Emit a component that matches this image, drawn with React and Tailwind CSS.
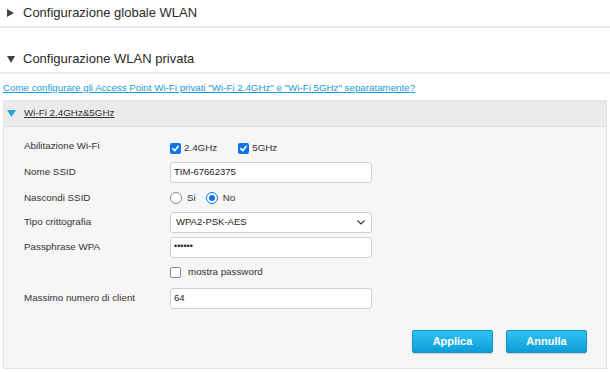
import React from "react";

function Field({ children }) {
  return <div className="w-[202px] h-[21px] bg-white border border-[#cfcfcf] rounded-[3px] flex items-center pl-[3px] pr-[6px] text-[9.5px] text-[#222]">{children}</div>;
}

function Row({ label, h, children }) {
  return (
    <div className={`flex items-center ${h}`}>
      <div className="w-[146px] text-[9.8px] text-[#333]">{label}</div>
      <div className="flex items-center">{children}</div>
    </div>
  );
}

function Check({ checked }) {
  return checked ? (
    <span className="w-[11px] h-[11px] rounded-[2px] bg-[#0b74ea] flex items-center justify-center">
      <svg width="9" height="9" viewBox="0 0 10 10"><path d="M2 5.2 L4.2 7.4 L8 2.6" fill="none" stroke="white" strokeWidth="1.8" strokeLinecap="round" strokeLinejoin="round" /></svg>
    </span>
  ) : (
    <span className="w-[11px] h-[11px] rounded-[2px] bg-white border border-[#8a8a8a]" />
  );
}

function Radio({ checked }) {
  return checked ? (
    <span className="w-[12px] h-[12px] rounded-full bg-white border-[1.5px] border-[#0b74ea] flex items-center justify-center">
      <span className="w-[6px] h-[6px] rounded-full bg-[#0b74ea]" />
    </span>
  ) : (
    <span className="w-[12px] h-[12px] rounded-full bg-white border border-[#8a8a8a]" />
  );
}

export default function App() {
  return (
    <div className="w-[610px] h-[372px] bg-white overflow-hidden font-['Liberation_Sans',Arial,sans-serif]">
      <div className="h-[26px] flex items-center pl-[7px]">
        <svg width="7" height="8" viewBox="0 0 7 8"><path d="M0 0 L7 4 L0 8 Z" fill="#444" /></svg>
        <span className="ml-[9px] text-[13px] text-[#2a2a2a]">Configurazione globale WLAN</span>
      </div>
      <div className="h-[2px] bg-[#ebebeb]" />
      <div className="h-[18px]" />
      <div className="h-[26px] flex items-center pl-[7px]">
        <svg width="8" height="7" viewBox="0 0 8 7"><path d="M0 0 L8 0 L4 7 Z" fill="#444" /></svg>
        <span className="ml-[8px] text-[13px] text-[#2a2a2a]">Configurazione WLAN privata</span>
      </div>
      <div className="h-[2px] bg-[#ebebeb]" />
      <div className="h-[26px] flex items-center pl-[3px] pt-[2px]">
        <span className="text-[9.75px] text-[#1a9ad6] underline">Come configurare gli Access Point Wi-Fi privati "Wi-Fi 2.4GHz" e "Wi-Fi 5GHz" separatamente?</span>
      </div>
      <div className="mx-[3px] border border-[#e3e3e3] h-[269px] flex flex-col bg-[#f6f6f6]">
        <div className="h-[26px] bg-[#ebebeb] border-b border-[#e0e0e0] flex items-center pl-[3px]">
          <svg width="9" height="7" viewBox="0 0 9 7"><path d="M0 0 L9 0 L4.5 7 Z" fill="#1fa7e0" /></svg>
          <span className="ml-[8px] text-[9.8px] text-[#333] underline">Wi-Fi 2.4GHz&amp;5GHz</span>
        </div>
        <div className="pl-[20px] pt-[7px] flex flex-col">
          <Row label="Abilitazione Wi-Fi" h="h-[25px]">
            <span className="flex items-center gap-[3px] text-[9.8px] text-[#333] mt-[4px]"><Check checked />2.4GHz</span>
            <span className="flex items-center gap-[3px] text-[9.8px] text-[#333] ml-[21px] mt-[4px]"><Check checked />5GHz</span>
          </Row>
          <Row label="Nome SSID" h="h-[27px]">
            <Field>TIM-67662375</Field>
          </Row>
          <Row label="Nascondi SSID" h="h-[24px]">
            <span className="flex items-center gap-[5px] text-[9.8px] text-[#333]"><Radio />Si</span>
            <span className="flex items-center gap-[5px] text-[9.8px] text-[#333] ml-[10px]"><Radio checked />No</span>
          </Row>
          <Row label="Tipo crittografia" h="h-[24px]">
            <Field>
              <span className="flex-1 pl-[2px]">WPA2-PSK-AES</span>
              <svg width="8" height="5" viewBox="0 0 8 5"><path d="M0.5 0.5 L4 4 L7.5 0.5" fill="none" stroke="#333" strokeWidth="1.1" /></svg>
            </Field>
          </Row>
          <Row label="Passphrase WPA" h="h-[26px]">
            <Field><span className="text-[9px]">••••••</span></Field>
          </Row>
          <Row label="" h="h-[25px]">
            <span className="flex items-center gap-[7px] text-[9.8px] text-[#333]"><Check />mostra password</span>
          </Row>
          <Row label="Massimo numero di client" h="h-[26px]">
            <Field>64</Field>
          </Row>
        </div>
        <div className="flex justify-end gap-[13px] pr-[19px] mt-[19px]">
          <button className="w-[81px] h-[23px] rounded-[2px] border border-[#1690c7] bg-gradient-to-b from-[#2ec3f2] to-[#0a9dd8] text-white text-[11px] font-bold shadow-[0_1px_1px_rgba(0,0,0,0.15)]">Applica</button>
          <button className="w-[81px] h-[23px] rounded-[2px] border border-[#1690c7] bg-gradient-to-b from-[#2ec3f2] to-[#0a9dd8] text-white text-[11px] font-bold shadow-[0_1px_1px_rgba(0,0,0,0.15)]">Annulla</button>
        </div>
      </div>
    </div>
  );
}
